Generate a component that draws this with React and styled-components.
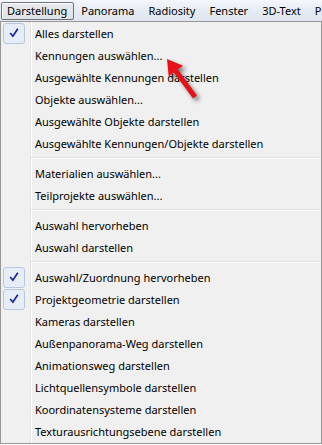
import React from "react"
import styled, { createGlobalStyle } from "styled-components"

const GlobalStyle = createGlobalStyle`
  body {
    margin: 0;
    background: #ffffff;
    font-family: "Noto Sans", "Open Sans", sans-serif;
    font-size: 11px;
    color: #000;
  }
`

const topMenus = ["Darstellung", "Panorama", "Radiosity", "Fenster", "3D-Text", "Projekt"]

const groups = [
  [
    { label: "Alles darstellen", checked: true },
    { label: "Kennungen auswählen..." },
    { label: "Ausgewählte Kennungen darstellen" },
    { label: "Objekte auswählen..." },
    { label: "Ausgewählte Objekte darstellen" },
    { label: "Ausgewählte Kennungen/Objekte darstellen" },
  ],
  [{ label: "Materialien auswählen..." }, { label: "Teilprojekte auswählen..." }],
  [{ label: "Auswahl hervorheben" }, { label: "Auswahl darstellen" }],
  [
    { label: "Auswahl/Zuordnung hervorheben", checked: true },
    { label: "Projektgeometrie darstellen", checked: true },
    { label: "Kameras darstellen" },
    { label: "Außenpanorama-Weg darstellen" },
    { label: "Animationsweg darstellen" },
    { label: "Lichtquellensymbole darstellen" },
    { label: "Koordinatensysteme darstellen" },
    { label: "Texturausrichtungsebene darstellen" },
  ],
]

function CheckMark() {
  return (
    <svg width="10" height="10" viewBox="0 0 10 10">
      <path d="M1.2 5 L3.9 8.2 L8.8 0.8" fill="none" stroke="#16239a" strokeWidth="1.7" />
    </svg>
  )
}

function Arrow() {
  return (
    <ArrowSvg width="50" height="60" viewBox="160 50 50 60">
      <polygon
        points="167,59 183.1,65.8 177.9,69.6 197,95.5 193,98.5 173.9,72.6 168.7,76.4"
        fill="#e5121a"
      />
    </ArrowSvg>
  )
}

function App() {
  return (
    <Page>
      <GlobalStyle />
      <MenuBar>
        {topMenus.map((m, i) => (
          <BarItem key={m} $active={i === 0}>
            {m}
          </BarItem>
        ))}
      </MenuBar>
      <Dropdown>
        {groups.map((g, gi) => (
          <React.Fragment key={gi}>
            {gi > 0 && <Separator />}
            {g.map((item) => (
              <Item key={item.label}>
                <Gutter>
                  {item.checked && (
                    <CheckBox>
                      <CheckMark />
                    </CheckBox>
                  )}
                </Gutter>
                <Label>{item.label}</Label>
              </Item>
            ))}
          </React.Fragment>
        ))}
      </Dropdown>
      <Arrow />
    </Page>
  )
}

export default App

const Page = styled.div`
  position: relative;
  width: 322px;
  overflow: hidden;
`
const MenuBar = styled.div`
  display: flex;
  height: 21px;
  padding-left: 1px;
  align-items: flex-start;
  background: linear-gradient(#f4f7fc, #e4eaf3 60%, #dfe6f0);
  white-space: nowrap;
  overflow: hidden;
`
const BarItem = styled.div`
  flex-shrink: 0;
  height: 16px;
  margin-top: 2px;
  margin-right: 1px;
  padding: 0 6px 0 5px;
  line-height: 16px;
  border: 1px solid ${(p) => (p.$active ? "#6f7378" : "transparent")};
  border-radius: 2px;
  background: ${(p) => (p.$active ? "linear-gradient(#e6eaee, #dfe3e8)" : "transparent")};
  box-shadow: ${(p) => (p.$active ? "inset 1px 1px 0 #ffffff" : "none")};
`
const Dropdown = styled.div`
  box-sizing: border-box;
  width: 322px;
  border: 1px solid #979797;
  padding-bottom: 1px;
  background: linear-gradient(
    to right,
    #f0f0f0 29px,
    #e2e3e3 29px,
    #e2e3e3 30px,
    #ffffff 30px,
    #ffffff 31px,
    #f0f0f0 31px
  );
`
const Item = styled.div`
  display: flex;
  align-items: center;
  height: 22px;
`
const Gutter = styled.div`
  width: 31px;
  height: 22px;
  display: flex;
  align-items: center;
  flex-shrink: 0;
`
const CheckBox = styled.div`
  box-sizing: border-box;
  width: 22px;
  height: 21px;
  margin-left: 2px;
  border: 1px solid #b6c9e3;
  border-radius: 3px;
  background: #e6edf7;
  display: flex;
  align-items: center;
  justify-content: center;
`
const Label = styled.span`
  padding-left: 3px;
  white-space: nowrap;
`
const Separator = styled.div`
  height: 8px;
  margin-left: 30px;
  margin-right: 2px;
  background: linear-gradient(
    transparent 3px,
    #e0e0e0 3px,
    #e0e0e0 4px,
    #ffffff 4px,
    #ffffff 5px,
    transparent 5px
  );
`
const ArrowSvg = styled.svg`
  position: absolute;
  left: 160px;
  top: 50px;
  filter: drop-shadow(3px 3px 2px rgba(0, 0, 0, 0.45));
`
